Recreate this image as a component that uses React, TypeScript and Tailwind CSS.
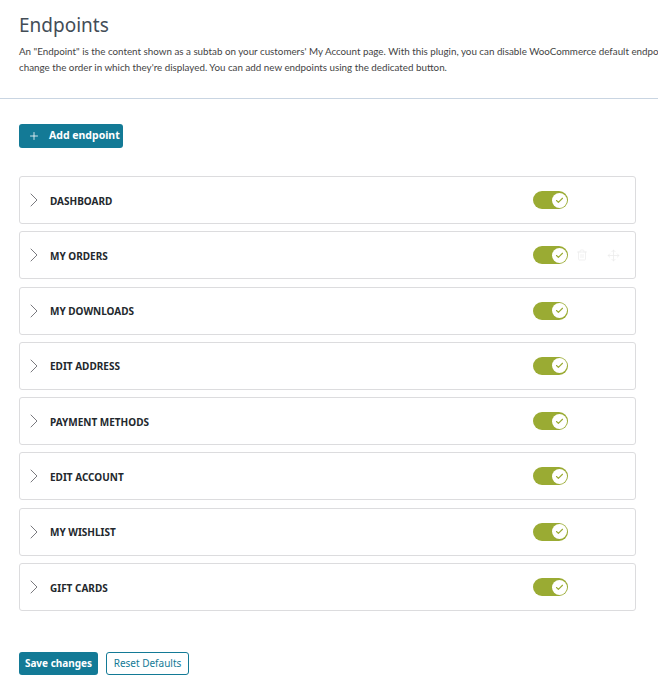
import { ChevronRight, Plus, Check, Trash2, Move } from 'lucide-react';

const endpoints = [
  'Dashboard',
  'My orders',
  'My downloads',
  'Edit address',
  'Payment methods',
  'Edit account',
  'My wishlist',
  'Gift cards',
];

function Toggle() {
  return (
    <div className="w-[35px] h-[18px] rounded-full bg-[#9aab33] flex items-center justify-end pr-[1.5px]">
      <div className="w-[15px] h-[15px] rounded-full bg-white flex items-center justify-center">
        <Check className="w-[9px] h-[9px] text-[#9aab33]" strokeWidth={3} />
      </div>
    </div>
  );
}

export default function App() {
  return (
    <div className="w-[658px] h-[687px] overflow-hidden bg-white font-['Noto_Sans',sans-serif] text-[#3c434a]">
      <div className="px-[19px] pt-[13px]">
        <h1 className="text-[19px] leading-[24px] text-[#434d57] font-normal">Endpoints</h1>
        <div className="mt-[6px] text-[9.8px] leading-[16px] text-[#444] whitespace-nowrap font-['Lato',sans-serif]">
          <p>
            An "Endpoint" is the content shown as a subtab on your customers' My Account page. With this plugin, you can disable WooCommerce default endpoints and
          </p>
          <p>change the order in which they're displayed. You can add new endpoints using the dedicated button.</p>
        </div>
      </div>
      <div className="mt-[23px] h-px bg-[#c9d5e2]" />

      <div className="px-[19px]">
        <button className="mt-[25px] h-[24px] w-[104px] rounded-[3px] bg-[#137a96] text-white text-[10.5px] font-bold flex items-center pl-[9px] gap-[9px]">
          <Plus className="w-[12px] h-[12px]" strokeWidth={1.6} />
          Add endpoint
        </button>

        <div className="mt-[28px] w-[617px] flex flex-col gap-[7.3px]">
          {endpoints.map((name, i) => (
            <div
              key={name}
              className="h-[48px] border border-[#dcdcde] rounded-[3px] bg-white flex items-center"
            >
              <ChevronRight className="ml-[2px] w-[24px] h-[24px] text-[#6b6b70]" strokeWidth={0.9} />
              <span className="ml-[4px] mt-[2px] text-[10px] font-bold uppercase text-[#23282d]">
                {name}
              </span>
              <div className="ml-auto mr-[15px] flex items-center">
                <Toggle />
                <Trash2
                  className={`ml-[8px] w-[12px] h-[12px] text-[#ececec] ${i === 1 ? '' : 'opacity-0'}`}
                  strokeWidth={1.5}
                />
                <Move
                  className={`ml-[19px] w-[13px] h-[13px] text-[#ececec] ${i === 1 ? '' : 'opacity-0'}`}
                  strokeWidth={1.5}
                />
              </div>
            </div>
          ))}
        </div>

        <div className="mt-[41px] flex gap-[8px]">
          <button className="h-[23px] w-[79px] rounded-[3px] bg-[#137a96] text-white text-[10px] font-bold">
            Save changes
          </button>
          <button className="h-[23px] w-[83px] rounded-[3px] border border-[#137a96] bg-white text-[#137a96] text-[10px]">
            Reset Defaults
          </button>
        </div>
      </div>
    </div>
  );
}
